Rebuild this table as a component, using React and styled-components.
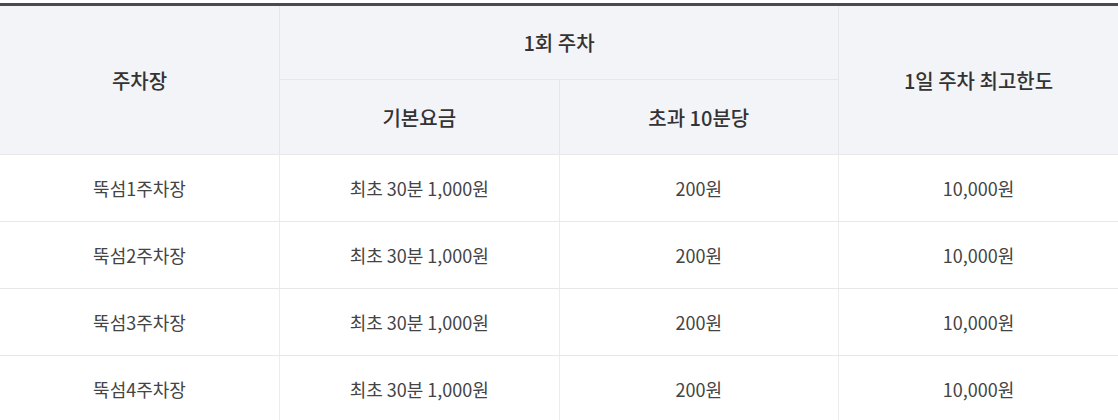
import React from 'react'
import styled, { createGlobalStyle } from 'styled-components'

const GlobalStyle = createGlobalStyle`
    body {
        margin: 0;
        background: #fff;
        font-family: "Noto Sans CJK KR", "Noto Sans", sans-serif;
    }
`;

const Wrapper = styled.div`
    padding-top: 3px;
`;

const Table = styled.table`
    width: 100%;
    border-collapse: collapse;
    table-layout: fixed;
    border-top: 3px solid #4a4a4a;
    text-align: center;
`;

const HeadCell = styled.th`
    background: #f3f4f8;
    color: #333;
    font-size: 20px;
    font-weight: 500;
    height: ${props => props.h}px;
    padding: 0;
    border-bottom: 1px solid #e6e7ea;
    border-left: ${props => props.first ? 'none' : '1px solid #e6e7ea'};
`;

const Cell = styled.td`
    color: #444;
    font-size: 18px;
    height: 66px;
    padding: 0;
    border-bottom: 1px solid #e8e8e8;
    border-left: ${props => props.first ? 'none' : '1px solid #ececec'};
`;

const rows = ['뚝섬1주차장', '뚝섬2주차장', '뚝섬3주차장', '뚝섬4주차장'];

export default function App() {
    return (
        <Wrapper>
            <GlobalStyle />
            <Table>
                <thead>
                    <tr>
                        <HeadCell first rowSpan={2}>주차장</HeadCell>
                        <HeadCell colSpan={2} h={73}>1회 주차</HeadCell>
                        <HeadCell rowSpan={2}>1일 주차 최고한도</HeadCell>
                    </tr>
                    <tr>
                        <HeadCell h={74}>기본요금</HeadCell>
                        <HeadCell h={74}>초과 10분당</HeadCell>
                    </tr>
                </thead>
                <tbody>
                    {rows.map(name => (
                        <tr key={name}>
                            <Cell first>{name}</Cell>
                            <Cell>최초 30분 1,000원</Cell>
                            <Cell>200원</Cell>
                            <Cell>10,000원</Cell>
                        </tr>
                    ))}
                </tbody>
            </Table>
        </Wrapper>
    )
}
